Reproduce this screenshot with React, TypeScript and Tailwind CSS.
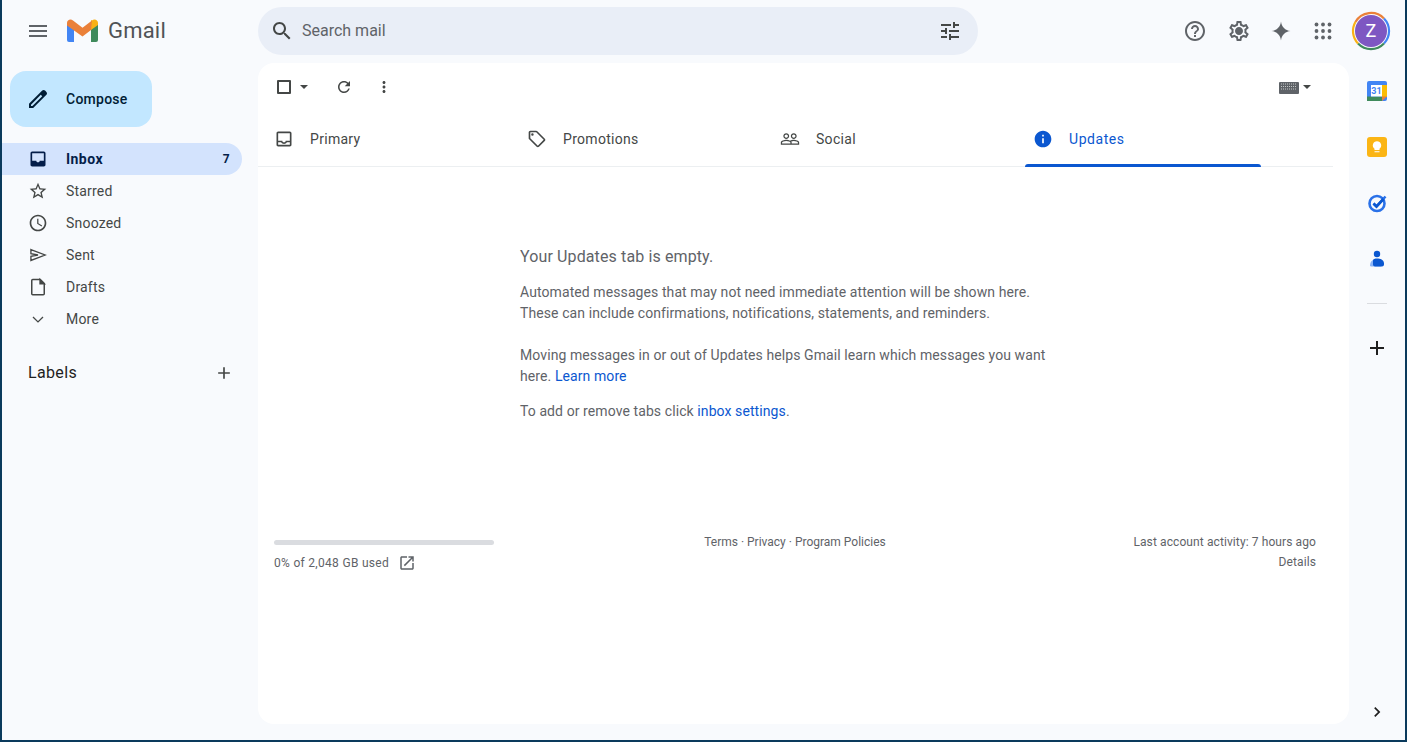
import React from "react";

type IconProps = { d: string; size?: number; color?: string; className?: string };
function Icon({ d, size = 24, color = "#444746", className = "" }: IconProps) {
  return (
    <svg width={size} height={size} viewBox="0 0 24 24" fill={color} className={className}>
      <path d={d} />
    </svg>
  );
}

function StrokeIcon({ d, size = 20, color = "#444746", width = 1.6 }: { d: string; size?: number; color?: string; width?: number }) {
  return (
    <svg width={size} height={size} viewBox="0 0 24 24" fill="none" stroke={color} strokeWidth={width}>
      <path d={d} />
    </svg>
  );
}

const P = {
  menu: "M3 18h18v-2H3v2zm0-5h18v-2H3v2zm0-7v2h18V6H3z",
  search:
    "M15.5 14h-.79l-.28-.27C15.41 12.59 16 11.11 16 9.5 16 5.91 13.09 3 9.5 3S3 5.91 3 9.5 5.91 16 9.5 16c1.61 0 3.09-.59 4.23-1.57l.27.28v.79l5 4.99L20.49 19l-4.99-5zm-6 0C7.01 14 5 11.99 5 9.5S7.01 5 9.5 5 14 7.01 14 9.5 11.99 14 9.5 14z",
  tune: "M3 17v2h6v-2H3zM3 5v2h10V5H3zm10 16v-2h8v-2h-8v-2h-2v6h2zM7 9v2H3v2h4v2h2V9H7zm14 4v-2H11v2h10zm-6-4h2V7h4V5h-4V3h-2v6z",
  help: "M11 18h2v-2h-2v2zm1-16C6.48 2 2 6.48 2 12s4.48 10 10 10 10-4.48 10-10S17.52 2 12 2zm0 18c-4.41 0-8-3.59-8-8s3.59-8 8-8 8 3.59 8 8-3.59 8-8 8zm0-14c-2.21 0-4 1.79-4 4h2c0-1.1.9-2 2-2s2 .9 2 2c0 2-3 1.75-3 5h2c0-2.25 3-2.5 3-5 0-2.21-1.79-4-4-4z",
  gear: "M19.43 12.98c.04-.32.07-.64.07-.98 0-.34-.03-.66-.07-.98l2.11-1.65c.19-.15.24-.42.12-.64l-2-3.46c-.09-.16-.26-.25-.44-.25-.06 0-.12.01-.17.03l-2.49 1c-.52-.4-1.08-.73-1.69-.98l-.38-2.65C14.46 2.18 14.25 2 14 2h-4c-.25 0-.46.18-.49.42l-.38 2.65c-.61.25-1.17.59-1.69.98l-2.49-1c-.06-.02-.12-.03-.18-.03-.17 0-.34.09-.43.25l-2 3.46c-.13.22-.07.49.12.64l2.11 1.65c-.04.32-.07.65-.07.98 0 .33.03.66.07.98l-2.11 1.65c-.19.15-.24.42-.12.64l2 3.46c.09.16.26.25.44.25.06 0 .12-.01.17-.03l2.49-1c.52.4 1.08.73 1.69.98l.38 2.65c.03.24.24.42.49.42h4c.25 0 .46-.18.49-.42l.38-2.65c.61-.25 1.17-.59 1.69-.98l2.49 1c.06.02.12.03.18.03.17 0 .34-.09.43-.25l2-3.46c.12-.22.07-.49-.12-.64l-2.11-1.65zm-1.98-1.71c.04.31.05.52.05.73 0 .21-.02.43-.05.73l-.14 1.13.89.7 1.08.84-.7 1.21-1.27-.51-1.04-.42-.9.68c-.43.32-.84.56-1.25.73l-1.06.43-.16 1.13-.2 1.35h-1.4l-.19-1.35-.16-1.13-1.06-.43c-.43-.18-.83-.41-1.23-.71l-.91-.7-1.06.43-1.27.51-.7-1.21 1.08-.84.89-.7-.14-1.13c-.03-.31-.05-.54-.05-.74s.02-.43.05-.73l.14-1.13-.89-.7-1.08-.84.7-1.21 1.27.51 1.04.42.9-.68c.43-.32.84-.56 1.25-.73l1.06-.43.16-1.13.2-1.35h1.39l.19 1.35.16 1.13 1.06.43c.43.18.83.41 1.23.71l.91.7 1.06-.43 1.27-.51.7 1.21-1.07.85-.89.7.14 1.13zM12 8c-2.21 0-4 1.79-4 4s1.79 4 4 4 4-1.79 4-4-1.79-4-4-4z",
  spark: "M12 2.500C12.600 7.800 16.200 11.400 21.500 12 16.200 12.600 12.600 16.200 12 21.500 11.400 16.200 7.800 12.600 2.500 12 7.800 11.400 11.400 7.800 12 2.500z",
  star: "M22 9.24l-7.19-.62L12 2 9.19 8.63 2 9.24l5.46 4.73L5.82 21 12 17.27 18.18 21l-1.63-7.03L22 9.24zM12 15.4l-3.76 2.27 1-4.28-3.32-2.88 4.38-.38L12 6.1l1.71 4.04 4.38.38-3.32 2.88 1 4.28L12 15.4z",
  clock:
    "M11.99 2C6.47 2 2 6.48 2 12s4.47 10 9.99 10C17.52 22 22 17.52 22 12S17.52 2 11.99 2zM12 20c-4.42 0-8-3.58-8-8s3.58-8 8-8 8 3.58 8 8-3.58 8-8 8zm.5-13H11v6l5.25 3.15.75-1.23-4.5-2.67z",
  plus: "M19 13h-6v6h-2v-6H5v-2h6V5h2v6h6v2z",
  refresh:
    "M17.65 6.35C16.2 4.9 14.21 4 12 4c-4.42 0-7.99 3.58-7.99 8s3.57 8 7.99 8c3.73 0 6.84-2.55 7.73-6h-2.08c-.82 2.33-3.04 4-5.65 4-3.31 0-6-2.69-6-6s2.69-6 6-6c1.66 0 3.14.69 4.22 1.78L13 11h7V4l-2.35 2.35z",
  dots: "M12 8c1.1 0 2-.9 2-2s-.9-2-2-2-2 .9-2 2 .9 2 2 2zm0 2c-1.1 0-2 .9-2 2s.9 2 2 2 2-.9 2-2-.9-2-2-2zm0 6c-1.1 0-2 .9-2 2s.9 2 2 2 2-.9 2-2-.9-2-2-2z",
  inboxO:
    "M19 3H4.99c-1.11 0-1.98.89-1.98 2L3 19c0 1.1.88 2 1.99 2H19c1.1 0 2-.9 2-2V5c0-1.11-.9-2-2-2zm0 16H5v-3h3.56c.69 1.19 1.97 2 3.45 2s2.75-.81 3.45-2H19v3zm0-5h-4.99c0 1.1-.9 2-2 2s-2-.9-2-2H5V5h14v9z",
  inboxF:
    "M19 3H4.99c-1.11 0-1.98.89-1.98 2L3 19c0 1.1.88 2 1.99 2H19c1.1 0 2-.9 2-2V5c0-1.11-.9-2-2-2zm0 11h-4.99c0 1.1-.9 2-2 2s-2-.9-2-2H5V5h14v9z",
  tag: "M21.41 11.58l-9-9C12.05 2.22 11.55 2 11 2H4c-1.1 0-2 .9-2 2v7c0 .55.22 1.05.59 1.42l9 9c.36.36.86.58 1.41.58.55 0 1.05-.22 1.41-.59l7-7c.37-.36.59-.86.59-1.41 0-.55-.23-1.06-.59-1.42zM13 20.01L4 11V4h7v-.01l9 9-7 7.02zM6.5 5A1.5 1.5 0 1 0 6.5 8 1.5 1.5 0 1 0 6.5 5z",
  people:
    "M16.5 13c-1.2 0-3.07.34-4.5 1-1.43-.67-3.3-1-4.5-1C5.33 13 1 14.08 1 16.25V19h22v-2.75c0-2.17-4.33-3.25-6.5-3.25zm-4 4.5h-10v-1.25c0-.54 2.56-1.75 5-1.75s5 1.21 5 1.75v1.25zm9 0H14v-1.25c0-.46-.2-.86-.52-1.22.88-.3 1.96-.53 3.02-.53 2.44 0 5 1.21 5 1.75v1.25zM7.5 12c1.93 0 3.5-1.57 3.5-3.5S9.43 5 7.5 5 4 6.57 4 8.5 5.57 12 7.5 12zm0-5.5c1.1 0 2 .9 2 2s-.9 2-2 2-2-.9-2-2 .9-2 2-2zm9 5.5c1.93 0 3.5-1.57 3.5-3.5S18.43 5 16.5 5 13 6.57 13 8.5s1.57 3.5 3.5 3.5zm0-5.5c1.1 0 2 .9 2 2s-.9 2-2 2-2-.9-2-2 .9-2 2-2z",
  info: "M12 2C6.48 2 2 6.48 2 12s4.48 10 10 10 10-4.48 10-10S17.52 2 12 2zm1 15h-2v-6h2v6zm0-8h-2V7h2v2z",
  launch:
    "M19 19H5V5h7V3H5c-1.11 0-2 .9-2 2v14c0 1.1.89 2 2 2h14c1.1 0 2-.9 2-2v-7h-2v7zM14 3v2h3.59l-9.83 9.83 1.41 1.41L19 6.41V10h2V3h-7z",
  pencil:
    "M20.41 4.94l-1.35-1.35c-.78-.78-2.05-.78-2.83 0L3 16.82V21h4.18L20.41 7.77c.79-.78.79-2.05 0-2.83zM6.41 19.06L5 19v-1.36l9.82-9.82 1.41 1.41-9.82 9.83z",
  chevR: "M10 6L8.59 7.41 13.17 12l-4.58 4.59L10 18l6-6z",
};

function Apps() {
  const dots = [];
  const pos = [5.5, 12, 18.5];
  for (const y of pos) for (const x of pos) dots.push(<circle key={`${x}-${y}`} cx={x} cy={y} r={1.9} fill="#5f6368" />);
  return <svg width={24} height={24} viewBox="0 0 24 24">{dots}</svg>;
}

function Logo() {
  return (
    <svg width={31} height={24} viewBox="0 0 31 24">
      <path d="M0 5v16a2 2 0 0 0 2 2h5V9z" fill="#4285f4" />
      <path d="M31 5v16a2 2 0 0 1-2 2h-5V9z" fill="#3f8a5c" />
      <path d="M24 1v10l7-5V4c0-3-3.500-4.500-6-2.500z" fill="#f9b115" />
      <path d="M0 4c0-3 3.500-4.500 6-2.500L15.500 8.700 25 1.500 24 11l-8.500 6.500L0 6.500z" fill="#ea8039" />
    </svg>
  );
}

function CaretDown({ color = "#444746" }: { color?: string }) {
  return (
    <svg width={8} height={4} viewBox="0 0 8 4" fill={color}>
      <path d="M0 0h8L4 4z" />
    </svg>
  );
}

function NavRow({ label, icon, active, count }: { label: string; icon: React.ReactNode; active?: boolean; count?: string }) {
  return (
    <div className={`flex h-8 w-[240px] items-center rounded-r-2xl pl-[26px] pr-3 text-sm ${active ? "bg-[#d3e3fd] font-bold tracking-[0.45px] text-[#041e49]" : "tracking-[0.2px] text-[#444746]"}`}>
      <span className="flex w-[38px] items-center">{icon}</span>
      <span className="flex-1">{label}</span>
      {count && <span className="text-xs">{count}</span>}
    </div>
  );
}

function Tab({ label, icon, active }: { label: string; icon: string; active?: boolean }) {
  const color = active ? "#0b57d0" : "#444746";
  return (
    <div className="relative flex h-[54px] w-[253px] items-center pl-4">
      <Icon d={icon} size={20} color={color} />
      <span className={`ml-4 text-sm ${active ? "tracking-[0.55px] text-[#0b57d0]" : "tracking-[0.3px] text-[#444746]"}`}>{label}</span>
      {active && <span className="absolute -bottom-px left-2 right-[9px] h-[3px] rounded-t-sm bg-[#0b57d0]" />}
    </div>
  );
}

function RailSlot({ children }: { children: React.ReactNode }) {
  return <div className="flex h-14 w-full items-center justify-center">{children}</div>;
}

export default function App() {
  return (
    <div className="h-[742px] w-[1407px] overflow-hidden bg-[#0a3a5c] pb-0.5 pl-0.5 pr-0.5 font-['Roboto',sans-serif] text-[#444746]">
      <div className="flex h-full flex-col bg-[#f8fafd]">
        <header className="flex h-[63px] shrink-0 items-center pb-px">
          <div className="flex w-[256px] shrink-0 items-center pl-6">
            <Icon d={P.menu} color="#5f6368" />
            <span className="ml-[17px] flex"><Logo /></span>
            <span className="ml-2.5 text-[22px] leading-none tracking-[0.2px] text-[#505356]">Gmail</span>
          </div>
          <div className="flex h-12 w-[720px] items-center rounded-3xl bg-[#e9eef7] pl-3 pr-4">
            <Icon d={P.search} />
            <span className="ml-[8px] flex-1 text-base text-[#5f6368]">Search mail</span>
            <Icon d={P.tune} />
          </div>
          <div className="flex flex-1 items-center pl-[205px]">
            <Icon d={P.help} color="#5f6368" />
            <span className="ml-5"><Icon d={P.gear} color="#5f6368" /></span>
            <span className="ml-[18px]"><Icon d={P.spark} color="#5f6368" /></span>
            <span className="ml-[18px]"><Apps /></span>
            <div className="relative ml-[16px] flex h-10 w-10 items-center justify-center">
              <svg width={40} height={40} viewBox="0 0 40 40" className="absolute inset-0" fill="none" strokeWidth="2.200">
                <path d="M4.400 11A18 18 0 0 1 33 7.500" stroke="#ea8039" />
                <path d="M33 7.500A18 18 0 0 1 33 32.500" stroke="#4285f4" />
                <path d="M33 32.500A18 18 0 0 1 7 32.500" stroke="#3f8a5c" />
                <path d="M7 32.500A18 18 0 0 1 4.400 11" stroke="#f9b115" />
              </svg>
              <div className="flex h-8 w-8 items-center justify-center rounded-full bg-[#7e57c2] text-lg text-white">Z</div>
            </div>
          </div>
        </header>

        <div className="flex min-h-0 flex-1">
          <aside className="w-[256px] shrink-0">
            <div className="ml-2 mt-2 flex h-14 w-[142px] items-center rounded-2xl bg-[#c2e7ff] pl-4 text-sm font-medium tracking-[0.25px] text-[#001d35]">
              <Icon d={P.pencil} color="#001d35" />
              <span className="ml-4">Compose</span>
            </div>
            <nav className="mt-4 flex flex-col">
              <NavRow label="Inbox" active count="7" icon={<Icon d={P.inboxF} size={20} color="#041e49" />} />
              <NavRow label="Starred" icon={<Icon d={P.star} size={20} />} />
              <NavRow label="Snoozed" icon={<Icon d={P.clock} size={20} />} />
              <NavRow label="Sent" icon={<StrokeIcon d="M3.500 5.500L20.500 12 3.500 18.500V13.500L12 12 3.500 10.500z" />} />
              <NavRow
                label="Drafts"
                icon={
                  <svg width={20} height={20} viewBox="0 0 24 24" fill="none" stroke="#444746" strokeWidth={1.8}>
                    <path d="M7 3h7.500L19.500 8V20a1.200 1.200 0 0 1-1.200 1.200H5.700A1.200 1.200 0 0 1 4.500 20V4.200A1.200 1.200 0 0 1 5.700 3z" />
                    <path d="M14.500 3v5h5z" fill="#444746" />
                  </svg>
                }
              />
              <NavRow label="More" icon={<StrokeIcon d="M6 9.500l6 6 6-6" />} />
            </nav>
            <div className="mt-[22px] flex h-8 w-[240px] items-center justify-between pl-[26px] pr-2">
              <span className="text-base tracking-[0.35px] text-[#1f1f1f]">Labels</span>
              <Icon d={P.plus} size={20} />
            </div>
          </aside>

          <main className="mb-4 flex w-[1091px] shrink-0 flex-col rounded-2xl bg-white">
            <div className="flex h-12 shrink-0 items-center pl-[19px] pr-[38px]">
              <span className="h-[14px] w-[14px] rounded-[1px] border-2 border-[#444746]" />
              <span className="ml-[9px] flex"><CaretDown /></span>
              <span className="ml-[27px] flex"><Icon d={P.refresh} size={18} /></span>
              <span className="ml-[22px] flex"><Icon d={P.dots} size={18} /></span>
              <svg width={20} height={12} viewBox="0 0 20 12" className="ml-auto mt-0.5">
                <rect width="20" height="12" rx="1" fill="#5f6368" />
                <path d="M2 2h16M2 4.500h16M2 7h16" stroke="#c4c7c5" strokeWidth="1" strokeDasharray="1 1" />
              </svg>
              <span className="ml-[4px] flex"><CaretDown /></span>
            </div>
            <div className="mr-4 flex shrink-0 border-b border-[#eceff1] pt-px">
              <Tab label="Primary" icon={P.inboxO} />
              <Tab label="Promotions" icon={P.tag} />
              <Tab label="Social" icon={P.people} />
              <Tab label="Updates" icon={P.info} active />
            </div>

            <section className="ml-[262px] w-[540px] pt-[80px] text-sm leading-[21px] tracking-[0.09px] text-[#5f6368]">
              <h2 className="text-base font-normal leading-5 tracking-[0.12px]">Your Updates tab is empty.</h2>
              <p className="mt-[15px]">
                Automated messages that may not need immediate attention will be shown here.
                <br />
                These can include confirmations, notifications, statements, and reminders.
              </p>
              <p className="mt-[21px]">
                Moving messages in or out of Updates helps Gmail learn which messages you want
                <br />
                here. <span className="text-[#0b57d0]">Learn more</span>
              </p>
              <p className="mt-[14px]">
                To add or remove tabs click <span className="text-[#0b57d0]">inbox settings</span>.
              </p>
            </section>

            <footer className="ml-4 mr-[33px] mt-[115px] flex text-xs leading-5 text-[#5f6368]">
              <div className="w-[354px]">
                <div className="mt-[3px] h-[5px] w-[220px] rounded-full bg-[#dadce0]" />
                <div className="mt-2 flex items-center tracking-[0.3px]">
                  <span>0% of 2,048 GB used</span>
                  <span className="ml-[9px] flex"><Icon d={P.launch} size={18} color="#5f6368" /></span>
                </div>
              </div>
              <div className="-mt-[5px] w-[334px] text-center">Terms · Privacy · Program Policies</div>
              <div className="-mt-[5px] flex-1 text-right tracking-[0.1px]">
                <div>Last account activity: 7 hours ago</div>
                <div>Details</div>
              </div>
            </footer>
          </main>

          <aside className="flex flex-1 flex-col items-center">
            <RailSlot>
              <svg width={20} height={20} viewBox="0 0 20 20">
                <rect width="20" height="20" rx="2" fill="#4285f4" />
                <rect x="15" y="4" width="5" height="12" fill="#fbbc04" />
                <rect y="15.500" width="15" height="4.500" fill="#3f8a5c" />
                <path d="M15 15.500h5L15 20z" fill="#ea8039" />
                <rect x="4" y="4" width="11" height="11.500" fill="#fff" />
                <text x="9.500" y="13" fontSize="9" fontWeight="700" textAnchor="middle" fill="#4285f4" fontFamily="Roboto, sans-serif">31</text>
              </svg>
            </RailSlot>
            <RailSlot>
              <div className="flex h-5 w-5 items-center justify-center rounded-[3px] bg-[#fbb515]">
                <svg width={10} height={12} viewBox="0 0 12 14" fill="#fff">
                  <path d="M6 0a5 5 0 0 0-3 9v1.500h6V9a5 5 0 0 0-3-9zM3 12h6v1.200H3z" />
                </svg>
              </div>
            </RailSlot>
            <RailSlot>
              <svg width={20} height={20} viewBox="0 0 20 20" fill="none">
                <circle cx="10" cy="10.500" r="7.500" stroke="#2a71e8" strokeWidth="2.600" />
                <path d="M6.500 10.500l3 3L18.500 3.500" stroke="#2a71e8" strokeWidth="2.600" />
                <path d="M6.500 10.500l3 3L16.500 6" stroke="#0b57d0" strokeWidth="2.600" />
              </svg>
            </RailSlot>
            <RailSlot>
              <svg width={20} height={20} viewBox="0 0 20 20">
                <circle cx="10" cy="5" r="3.200" fill="#0b57d0" />
                <path d="M3 17c0-4 2-7 7-7h4v7.500H4z" fill="#8ab4f8" />
                <path d="M6 11.500C6 10 8 9.500 10 9.500c3 0 7 1 7 5v1c0 1-1 2-2 2H8c-1 0-2-1-2-2z" fill="#0b57d0" />
              </svg>
            </RailSlot>
            <div className="mt-4 h-px w-5 bg-[#dadce0]" />
            <div className="mt-[32px] flex"><Icon d={P.plus} color="#1f1f1f" /></div>
            <div className="mb-[18px] mt-auto flex"><Icon d={P.chevR} size={20} color="#1f1f1f" /></div>
          </aside>
        </div>
      </div>
    </div>
  );
}
